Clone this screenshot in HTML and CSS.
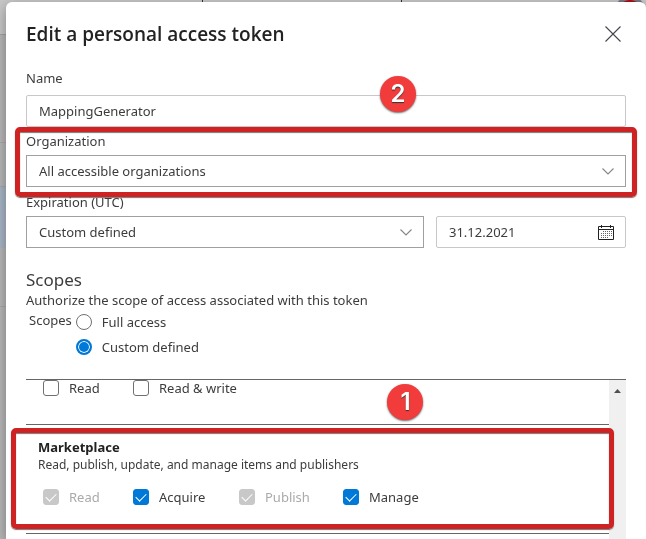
FILE: index.html
```html
<!DOCTYPE html>
<html lang="en">
<head>
<meta charset="utf-8">
<title>Edit a personal access token</title>
<link rel="stylesheet" href="styles.css">
</head>
<body>
<div class="backdrop" aria-hidden="true">
  <div class="backdrop-bar"><span class="avatar"></span></div>
  <div class="backdrop-row"></div>
  <div class="backdrop-row short"></div>
  <div class="backdrop-row selected"></div>
  <div class="backdrop-row last"></div>
</div>

<main class="panel">
  <header class="panel-header">
    <h1>Edit a personal access token</h1>
    <button class="close" type="button" aria-label="Close">
      <svg width="16" height="16" viewBox="0 0 16 16"><path d="M0.5 0.5 15.5 15.5M15.5 0.5 0.5 15.5" fill="none" stroke="#44444c" stroke-width="1.1"/></svg>
    </button>
  </header>

  <form class="form">
    <div class="field name-field">
      <label for="name">Name</label>
      <input class="box" id="name" type="text" value="MappingGenerator">
      <span class="step step-two">2</span>
    </div>

    <div class="field organization">
      <label for="organization">Organization</label>
      <div class="select">
        <select class="box" id="organization"><option>All accessible organizations</option></select>
        <svg class="chevron" width="12" height="7" viewBox="0 0 12 7"><path d="M0.5 0.5 6 6 11.5 0.5" fill="none" stroke="#858585" stroke-width="1.1"/></svg>
      </div>
      <span class="highlight"></span>
    </div>

    <div class="field">
      <label for="expiration">Expiration (UTC)</label>
      <div class="dates">
        <div class="select">
          <select class="box" id="expiration"><option>Custom defined</option></select>
          <svg class="chevron" width="12" height="7" viewBox="0 0 12 7"><path d="M0.5 0.5 6 6 11.5 0.5" fill="none" stroke="#858585" stroke-width="1.1"/></svg>
        </div>
        <div class="date">
          <input class="box" type="text" value="31.12.2021" aria-label="Expiration date">
          <button class="calendar" type="button" aria-label="Choose a date">
            <svg width="16" height="15" viewBox="0 0 16 15" fill="none" stroke="#222">
              <path d="M0.5 1.5h15v13h-15zM0.5 4.5h15M3.5 0v3M12.5 0v3"/>
              <path d="M5 6.5h9M3 8.5h11M3 10.5h11M3 12.5h8" stroke="#666" stroke-dasharray="1 1"/>
            </svg>
          </button>
        </div>
      </div>
    </div>

    <section class="scopes">
      <h2>Scopes</h2>
      <p>Authorize the scope of access associated with this token</p>
      <div class="scope-choice" role="radiogroup" aria-labelledby="scope-label">
        <span id="scope-label">Scopes</span>
        <div class="radios">
          <label class="option"><input type="radio" name="scope">Full access</label>
          <label class="option"><input type="radio" name="scope" checked>Custom defined</label>
        </div>
      </div>
    </section>

    <div class="scope-list">
      <div class="scope-items">
        <fieldset class="scope-item clipped">
          <div class="checks">
            <label class="option"><input type="checkbox">Read</label>
            <label class="option"><input type="checkbox">Read &amp; write</label>
          </div>
          <span class="step step-one">1</span>
        </fieldset>
        <fieldset class="scope-item marketplace">
          <h3>Marketplace</h3>
          <p>Read, publish, update, and manage items and publishers</p>
          <div class="checks">
            <label class="option"><input type="checkbox" checked disabled><span>Read</span></label>
            <label class="option"><input type="checkbox" checked><span>Acquire</span></label>
            <label class="option"><input type="checkbox" checked disabled><span>Publish</span></label>
            <label class="option"><input type="checkbox" checked><span>Manage</span></label>
          </div>
          <span class="highlight"></span>
        </fieldset>
      </div>
      <div class="scrollbar"><svg width="7" height="4" viewBox="0 0 7 4"><path d="M3.5 0 7 4H0z" fill="#505050"/></svg></div>
    </div>
  </form>
</main>
</body>
</html>
```
FILE: styles.css
```css
* {
  box-sizing: border-box;
}

body {
  margin: 0;
  height: 100vh;
  overflow: hidden;
  padding: 2px 0 0 6px;
  font-family: "Segoe UI", "Noto Sans", "Open Sans", sans-serif;
  font-size: 13px;
  line-height: 20px;
  color: #3c3c3c;
}

h1, h2, h3, p {
  margin: 0;
}

.backdrop {
  position: fixed;
  inset: 0;
  z-index: -1;
  background: #b8b8b8;
}

.backdrop-bar {
  display: flex;
  justify-content: flex-end;
  height: 35px;
  border-bottom: 1px solid #a4a4a4;
  background:
    linear-gradient(#333, #333) 202px 0 / 1px 100% no-repeat,
    linear-gradient(#333, #333) 401px 0 / 1px 100% no-repeat,
    #c8c8c8;
}

.avatar {
  width: 32px;
  height: 32px;
  margin-top: -4px;
  border: 4px solid #777b88;
  border-radius: 50%;
  background: #b00c12;
}

.backdrop-row {
  height: 108px;
  border-bottom: 1px solid #aaa;
}

.short {
  height: 44px;
}

.selected {
  height: 61px;
  border: 0;
  background: #a9b7c6;
}

.last {
  height: 59px;
}

.panel {
  display: flex;
  flex-direction: column;
  height: 100%;
  padding: 0 20px;
  border-radius: 6px 6px 0 0;
  background: #fff;
  box-shadow: 0 4px 14px rgba(0, 0, 0, 0.36);
}

.panel-header {
  display: flex;
  justify-content: space-between;
  align-items: center;
  height: 64px;
}

h1 {
  font-family: "Segoe UI", "Open Sans", sans-serif;
  font-size: 19px;
  font-weight: 600;
  line-height: 28px;
  color: #222;
}

button {
  display: grid;
  place-items: center;
  padding: 5px;
  border: 0;
  background: none;
}

.form {
  display: flex;
  flex: 1;
  flex-direction: column;
  min-height: 0;
}

.field {
  position: relative;
  display: flex;
  flex-direction: column;
}

.field > label {
  padding-bottom: 4px;
  line-height: 20px;
}

.name-field > label {
  padding: 2px 0 7px;
}

.organization {
  padding: 4px 0 5px;
}

.box {
  width: 100%;
  height: 32px;
  padding: 0 12px;
  border: 1px solid #c8c8c8;
  border-radius: 2px;
  background: #fff;
  color: inherit;
  font: inherit;
}

.select,
.date {
  display: grid;
  align-items: center;
}

.select > *,
.date > * {
  grid-area: 1 / 1;
}

select.box {
  border-color: #a0a0a0;
  border-radius: 0;
  appearance: none;
}

.chevron {
  justify-self: end;
  margin-right: 12px;
  pointer-events: none;
}

.calendar {
  justify-self: end;
  margin-right: 7px;
}

.dates {
  display: grid;
  grid-template-columns: 398fr 190fr;
  gap: 12px;
}

.highlight {
  position: absolute;
  inset: 0 -11px -5px;
  border: 5px solid #cf2222;
  border-radius: 5px;
  box-shadow: 0 1px 1px #777, inset 0 1px 1px #777;
  pointer-events: none;
}

.step {
  position: absolute;
  display: grid;
  place-items: center;
  width: 36px;
  height: 36px;
  border-radius: 50%;
  background: #f23b3b;
  box-shadow: 0 1px 2px #666;
  color: #fff;
  font-family: Inter, "Liberation Sans", Arial, sans-serif;
  font-size: 24px;
  font-weight: 600;
  text-shadow: 0 1px 1px #333;
}

.step-two {
  top: 10px;
  left: 59%;
}

.step-one {
  top: 4px;
  left: 62%;
}

.scopes {
  padding: 20px 0;
}

h2 {
  font-size: 17px;
  font-weight: 400;
  line-height: 24px;
}

.scopes > p {
  line-height: 16px;
}

.scope-choice {
  display: flex;
  gap: 4px;
  padding: 2px 0 0 3px;
}

.radios {
  display: grid;
  gap: 1px;
}

.option {
  display: flex;
  align-items: center;
  gap: 10px;
  height: 24px;
}

.option input {
  display: grid;
  place-items: center;
  width: 16px;
  height: 16px;
  margin: 0;
  border: 1px solid #707070;
  border-radius: 3px;
  background: #fff;
  appearance: none;
}

.option input:checked {
  border-color: #0078d7;
  background: #0078d7;
}

.option input[type="radio"] {
  border-radius: 50%;
}

.option input[type="radio"]:checked {
  border-width: 2px;
  box-shadow: inset 0 0 0 1px #fff;
}

.option input[type="checkbox"]:checked::before {
  content: "";
  width: 9px;
  height: 5px;
  margin-bottom: 3px;
  border: solid #fff;
  border-width: 0 0 1px 1px;
  transform: rotate(-45deg);
}

.option input:disabled {
  border-color: #c8c8c8;
  background: #c8c8c8;
}

.option input:disabled + span {
  color: #aaa;
}

.scope-list {
  display: flex;
  flex: 1;
  min-height: 0;
  border-top: 1px solid #666;
}

.scope-items {
  flex: 1;
}

.scope-item {
  position: relative;
  margin: 0;
  padding: 12px;
  border: 0;
  border-bottom: 1px solid #666;
}

.clipped {
  height: 45px;
  padding-top: 0;
}

.clipped .option {
  height: 16px;
}

.marketplace .highlight {
  inset: 3px -5px 4px -15px;
}

h3 {
  font-size: 13px;
  font-weight: 700;
  line-height: 20px;
  color: #222;
}

.scope-item p {
  font-size: 12px;
  line-height: 16px;
}

.checks {
  display: grid;
  grid-template-columns: 90px 106px 104px 1fr;
  padding-left: 5px;
}

.marketplace .checks {
  padding-top: 12px;
  padding-bottom: 12px;
}

.scrollbar {
  width: 17px;
  padding: 8px 5px;
  background: #f0f0f0;
  line-height: 0;
}
```
